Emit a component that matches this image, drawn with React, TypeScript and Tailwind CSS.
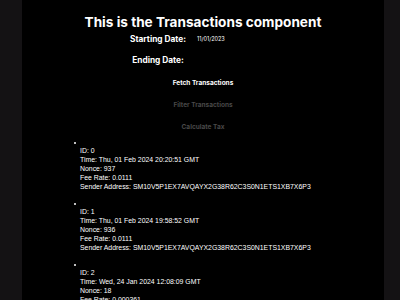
import React from "react";

type Tx = {
  id: number;
  time: string;
  nonce: number;
  feeRate: string;
  sender: string;
};

const SENDER = "SM10V5P1EX7AVQAYX2G38R62C3S0N1ETS1XB7X6P3";

const txs: Tx[] = [
  { id: 0, time: "Thu, 01 Feb 2024 20:20:51 GMT", nonce: 937, feeRate: "0.0111", sender: SENDER },
  { id: 1, time: "Thu, 01 Feb 2024 19:58:52 GMT", nonce: 936, feeRate: "0.0111", sender: SENDER },
  { id: 2, time: "Wed, 24 Jan 2024 12:08:09 GMT", nonce: 18, feeRate: "0.000361", sender: SENDER },
];

export default function App() {
  return (
    <div
      className="h-[300px] w-[400px] overflow-hidden bg-[#141214] text-white"
      style={{ fontFamily: "Inter, 'Liberation Sans', sans-serif" }}
    >
      <div className="h-full w-[362px] bg-black pt-[12px] ml-[22px]">
        <h1 className="text-center text-[13.6px] font-bold leading-[20px]">
          This is the Transactions component
        </h1>

        {/* Dates */}
        <div className="mt-[1px] flex items-center justify-center gap-[5px] text-[8.3px] font-bold leading-[12px]">
          <label>Starting Date:</label>
          <span className="w-[85px] pl-[6px] text-[5.5px] font-normal">11/01/2023</span>
        </div>
        <div className="mt-[9px] flex items-center justify-center gap-[5px] text-[8.3px] font-bold leading-[12px]">
          <label>Ending Date:</label>
          <span className="w-[85px]" />
        </div>

        {/* Actions */}
        <div className="mt-[12px] flex flex-col items-center gap-[12px] text-[6.5px] font-bold leading-[10px]">
          <button className="text-white">Fetch Transactions</button>
          <button disabled className="text-[#484848]">Filter Transactions</button>
          <button disabled className="text-[#484848]">Calculate Tax</button>
        </div>

        {/* List */}
        <ul
          className="mt-[7px] pl-[58px] text-[6.9px] leading-[9px]"
          style={{ fontFamily: "'Liberation Sans', Arial, sans-serif" }}
        >
          {txs.map((tx) => (
            <li key={tx.id} className="mb-[9px]">
              <div className="flex h-[7px] items-center">
                <span className="-ml-[6px] h-[2px] w-[2px] rounded-full bg-white" />
              </div>
              <div>ID: {tx.id}</div>
              <div>Time: {tx.time}</div>
              <div>Nonce: {tx.nonce}</div>
              <div>Fee Rate: {tx.feeRate}</div>
              <div>Sender Address: {tx.sender}</div>
            </li>
          ))}
        </ul>
      </div>
    </div>
  );
}
